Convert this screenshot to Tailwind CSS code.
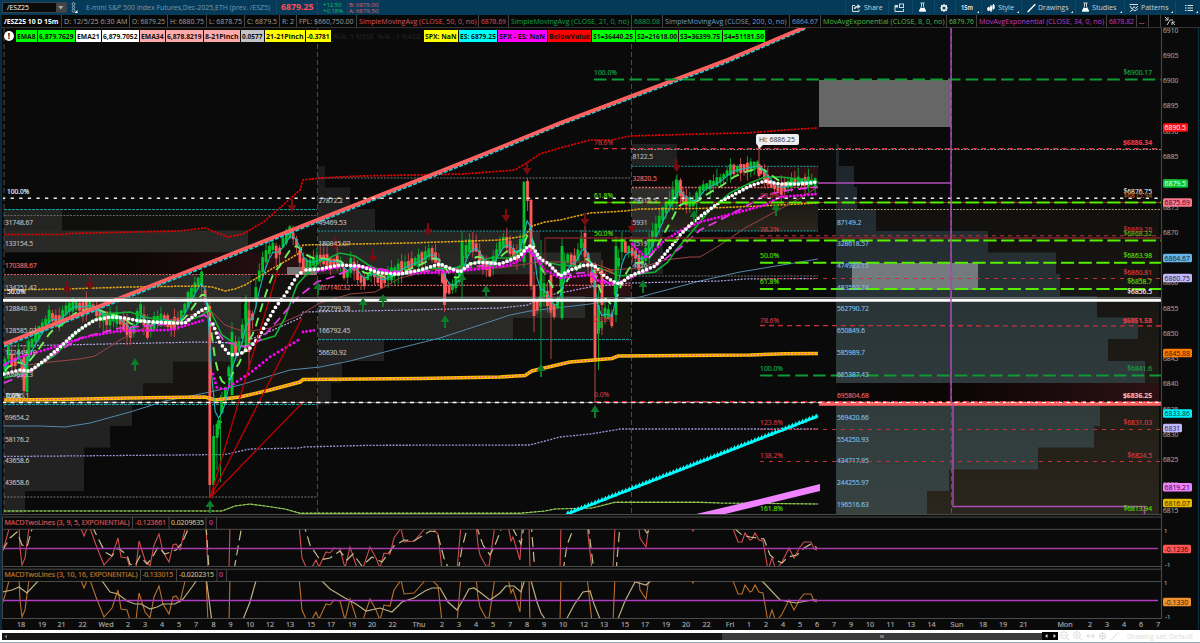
<!DOCTYPE html>
<html lang="en">
<head>
<meta charset="utf-8">
<title>/ESZ25 chart</title>
<script src="https://cdn.jsdelivr.net/npm/@tailwindcss/browser@4"></script>
</head>
<body class="bg-[#0a0a0a] w-[1200px] h-[643px] overflow-hidden font-['Open_Sans','Noto_Sans',sans-serif]">
<div class="flex flex-col w-[1200px] h-[643px] relative border-l-2 border-[#0b2c40]">
  <header class="flex h-[15px] bg-[#053b59] items-center text-[7px] text-[#b9c6cf] -ml-0.5 shrink-0 whitespace-nowrap leading-none">
    <div class="ml-[2px] w-[65px] h-[11px] bg-[#0b0b0b] border border-[#33454f] flex items-center text-white pl-[4px] shrink-0"><span data-w="22">/ESZ25</span><span class="ml-auto w-[10px] h-[9px] bg-[#444] flex items-center justify-center"><svg width="6" height="4"><path d="M0 0H5.5L2.75 3.5Z" fill="#aaa"/></svg></span></div>
    <svg class="ml-[4px] shrink-0" width="8" height="13"><g stroke="#8faec0" fill="none"><circle cx="2.5" cy="3" r="1.4"/><circle cx="2.5" cy="6.3" r="1.2"/><circle cx="2.5" cy="9.6" r="1.4"/></g><path d="M6.5 9v3h-3z" fill="#fff"/></svg>
    <div class="ml-[7px] w-[191px] shrink-0 text-[#7799ad] border-r border-[#17465f] h-[13px] flex items-center"><span data-w="184">E-mini S&amp;P 500 Index Futures,Dec-2025,ETH (prev. /ESZ5)</span></div>
    <div class="w-[40px] pl-[4px] text-[8.6px] font-bold text-[#ff4f55] shrink-0"><span data-w="32.5">6879.25</span></div>
    <div class="w-[30px] pl-[5px] text-[6px] leading-[6px] text-[#0ec55c] border-l border-[#17465f] shrink-0">+12.50<br>+0.18%</div>
    <div class="w-[32px] pl-[1px] text-[6px] leading-[6px] text-[#e06470] border-l border-r border-[#17465f] shrink-0">B: 6879.00<br>A: 6879.50</div>
    <div class="ml-auto flex items-center text-[#c9d2d8] text-[7.2px]">
      <div class="w-[43px] h-[13px] border-l border-[#0d4b6c] flex items-center pl-[5px] gap-[3px]"><svg width="10" height="10" fill="none" stroke="#d5dde2"><path d="M4 2.5H1.5V8.5H8V6.5"/><path d="M3.5 6Q4 3.5 7 3.5" stroke-width="1.5"/><path d="M6.5 1L9.7 3.5L6.5 6Z" fill="#d5dde2" stroke="none"/></svg><span data-w="18.5">Share</span></div>
      <div class="w-[24px] h-[13px] border-l border-[#0d4b6c] flex items-center pl-[5px]"><svg width="11" height="10" fill="none" stroke="#d5dde2"><path d="M4 2.5H1V8.5H9.5V6"/><path d="M1 3.5H4" stroke-width="2"/><rect x="5.5" y="1" width="4" height="3.5"/></svg></div>
      <div class="w-[22px] h-[13px] border-l border-[#0d4b6c] flex items-center pl-[5px]"><svg width="9" height="11"><path d="M2.5 1H6.5M3.5 1V4.5L1.3 9H7.7L5.5 4.5V1" stroke="#dfe5e8" fill="none" stroke-width=".9"/><path d="M2.6 6H6.4L8 9.4H1Z" fill="#fff"/></svg></div>
      <div class="w-[21px] h-[13px] border-l border-[#0d4b6c] flex items-center pl-[4px]"><svg width="10" height="10"><circle cx="5" cy="5" r="2.3" fill="none" stroke="#fff" stroke-width="1.4"/><path d="M5 1V2.5M5 7.5V9M1 5H2.5M7.5 5H9M2.2 2.2L3.2 3.2M6.8 6.8L7.8 7.8M7.8 2.2L6.8 3.2M3.2 6.8L2.2 7.8" stroke="#fff" stroke-width="1.2"/></svg></div>
      <div class="w-[26px] h-[13px] border-l border-[#0d4b6c] flex items-center pl-[5px] text-white font-semibold text-[6.3px]"><span data-w="12">15m</span><i class="ml-auto mt-[9px] mr-[2px] border-l-2 border-b-2 border-l-transparent border-white"></i></div>
      <div class="w-[40px] h-[13px] border-l border-[#0d4b6c] flex items-center pl-[5px] gap-[3px]"><svg width="8" height="10" stroke="#fff"><path d="M1.5 4V8M4 2V9M6.5 1V6.5"/><rect x=".8" y="5" width="1.4" height="2" fill="#fff"/><rect x="3.2" y="4" width="1.6" height="3" fill="#fff"/><rect x="5.8" y="2.5" width="1.5" height="3" fill="none" stroke-width=".7"/></svg><span data-w="16">Style</span><i class="ml-auto mt-[9px] mr-[2px] border-l-2 border-b-2 border-l-transparent border-white"></i></div>
      <div class="w-[54px] h-[13px] border-l border-[#0d4b6c] flex items-center pl-[5px] gap-[2px]"><svg width="9" height="10"><path d="M.7 9L8.3 1.3" stroke="#fff" stroke-width="1.4"/></svg><span data-w="30.5">Drawings</span><i class="ml-auto mt-[9px] mr-[2px] border-l-2 border-b-2 border-l-transparent border-white"></i></div>
      <div class="w-[49px] h-[13px] border-l border-[#0d4b6c] flex items-center pl-[5px] gap-[2px]"><svg width="9" height="11"><path d="M2.5 1H6.5M3.5 1V4.5L1.3 9H7.7L5.5 4.5V1" stroke="#dfe5e8" fill="none" stroke-width=".9"/><path d="M2.6 6H6.4L8 9.4H1Z" fill="#fff"/></svg><span data-w="24.5">Studies</span><i class="ml-auto mt-[9px] mr-[2px] border-l-2 border-b-2 border-l-transparent border-white"></i></div>
      <div class="w-[51px] h-[13px] border-l border-[#0d4b6c] flex items-center pl-[4px] gap-[2px]"><svg width="10" height="10" fill="none" stroke="#d5dde2"><path d="M.5 1.5H9M1 3L3 6L5 3.5L6.5 5.5L9 3M1 8.5L4 6.5L6 8L9 5.5"/></svg><span data-w="27.5">Patterns</span><i class="ml-auto mt-[9px] mr-[2px] border-l-2 border-b-2 border-l-transparent border-white"></i></div>
      <div class="w-[25px] h-[13px] border-l border-[#0d4b6c] flex items-center pl-[9px]"><svg width="8" height="8" stroke="#dfe5e8"><path d="M0 1.5H1.5M2.5 1.5H8M0 4H1.5M2.5 4H8M0 6.5H1.5M2.5 6.5H8"/></svg><i class="ml-auto mt-[9px] mr-[2px] border-l-2 border-b-2 border-l-transparent border-white"></i></div>
    </div>
  </header>
  <div id="status" class="flex h-[13px] shrink-0 bg-[#080808] border-b border-[#333] text-[7px] leading-[13px] whitespace-nowrap"></div>
  <main class="relative flex-1 -ml-0.5">
    <svg id="chart" class="absolute left-0 top-0 overflow-visible font-medium" width="1200" height="602" viewBox="0 28 1200 602"></svg>
    <div class="absolute left-[4px] top-[2px] flex items-center h-[12px]">
      <span class="w-[10px] h-[10px] mr-[2px] rounded-full bg-white text-black text-[8px] font-bold leading-[10px] text-center">!</span>
      <div id="labels" class="flex gap-px text-[6.8px] font-bold leading-[11px] whitespace-nowrap text-[#111]"></div>
    </div>
    <div class="absolute left-[756px] top-[105.5px] w-[43px] h-[11px] rounded-[2px] bg-[#eee] text-[#333] text-[7px] leading-[11px] pl-[3px] whitespace-nowrap"><span data-w="36">Hi: 6886.25</span></div>
  </main>
  <footer class="h-[13px] shrink-0 bg-white -ml-0.5 flex items-center border-b border-[#8fabb8]">
    <div class="ml-[2px] w-[720px] h-[7px] bg-[#161616] shrink-0 flex items-center pl-[2px]"><svg width="4" height="5"><path d="M3 .5V4.5L.5 2.5Z" fill="#777"/></svg></div>
    <div class="w-[320px] h-[7px] bg-[#3b3b3b] shrink-0 flex items-center justify-center"><i class="w-[4px] h-[3px] bg-[#777]"></i></div>
    <div class="w-[16px] h-[8px] bg-black flex items-center justify-around shrink-0"><svg width="3" height="4"><path d="M2.5 0V4L0 2Z" fill="#ddd"/></svg><svg width="3" height="4"><path d="M.5 0V4L3 2Z" fill="#ddd"/></svg></div>
    <svg width="64" height="12" class="shrink-0" fill="none" stroke="#dcdcdc"><circle cx="6" cy="5" r="3.3"/><path d="M8.5 7.5L11 10M4.5 5H7.5"/><circle cx="19" cy="5" r="3.3"/><path d="M21.5 7.5L24 10M17.5 5H20.5M19 3.5V6.5"/><path d="M29 6H36M31 4L28.5 6L31 8M34 4L36.5 6L34 8"/><circle cx="44.5" cy="6" r="3"/><path d="M44.5 2V10M40.5 6H48.5M53 10L61 2"/></svg>
    <div class="ml-[5px] text-[7px] text-[#dedede] whitespace-nowrap"><span data-w="66">Drawing set: Default</span></div>
  </footer>
</div>
<script>
const R='#dc5458',G='#16a24a',B='#6c9fc2',W='#a0a0a0';
const st=[['/ESZ25 10 D 15m',59.5,'#fff',1],['D: 12/5/25 6:30 AM',68.5,W],['O: 6879.25',38,W],['H: 6880.75',39,W],['L: 6878.75',38,W],['C: 6879.5',35,W],['R: 2',17,W],['FPL: $660,750.00',59.5,W],['SimpleMovingAvg (CLOSE, 50, 0, no)',122.5,R],['6878.69',30,R],['SimpleMovingAvg (CLOSE, 21, 0, no)',123,G],['6880.08',31,G],['SimpleMovingAvg (CLOSE, 200, 0, no)',126.5,B],['6864.67',31,B],['MovAvgExponential (CLOSE, 8, 0, no)',126.5,'#4fb84b'],['6879.76',30,'#4fc14b'],['MovAvgExponential (CLOSE, 34, 0, no)',130,'#c03cc0'],['6878.82',30,'#c03cc0'],['...',12,'#ccc'],['',12,W]];
document.getElementById('status').innerHTML=st.map(([t,w,c,b])=>`<div class="border-r border-[#444] pl-[2px] shrink-0 flex items-center ${b?'font-bold':''}" style="width:${w}px;color:${c}"><span ${t.length>3?`data-w="${t=='R: 2'?12:w-5}"`:''}>${t}</span></div>`).join('')+'<svg width="14" height="12" class="ml-[3px]" fill="none" stroke="#ddd"><path d="M1 2L4 5M4 2V5H1M3 10L6 5H9M8 7V10M8 7L11 10M8 7H11" stroke-width=".9"/></svg>';
const lb=[['EMA8',21,'#0f0'],['6,879.7629',37,'#0f0'],['EMA21',25,'#fff'],['6,879.7052',37,'#fff'],['EMA34',25,'#ffaaaa'],['6,878.8219',37,'#ffaaaa'],['8-21Pinch',36,'#ffaaaa'],['0.0577',23,'#c4c4c4'],['21-21Pinch',40,'#ff0'],['-0.3781',25,'#ff0'],['N/A :1 NYSE',43,''],['N/A :-1 NASD',46.5,''],['SPX: NaN',34,'#ff0'],['ES: 6879.25',38.5,'#0ff'],['SPX - ES: NaN',48.5,'#f0f'],['BelowValue',43.5,'#f00'],['S1=36440.25',42.5,'#0f0'],['S2=21618.00',42.7,'#0f0'],['S3=36399.75',42.7,'#0f0'],['S4=51181.50',42.5,'#0f0']];
document.getElementById('labels').innerHTML=lb.map(([t,w,c])=>`<div class="h-[12px] flex items-center justify-center ${c?'':'text-[#1c1c1c]'}" style="width:${w}px;${c?'background:'+c:''}"><span data-w="${w-2.5}">${t}</span></div>`).join('');
// captions with a fixed width
document.querySelectorAll('[data-w]').forEach(e=>{const w=e.dataset.w;e.outerHTML=`<svg class="overflow-visible shrink-0" width="${w}" height="11"><text x="0" y="8" fill="currentColor" textLength="${w}" lengthAdjust="spacingAndGlyphs">${e.innerHTML}</text></svg>`});

let o='';
const add=s=>o+=s;
const rect=(x,y,x2,y2,f)=>add(`<rect x="${x}" y="${y}" width="${x2-x}" height="${y2-y}" fill="${f}"/>`);
const ln=(x,y,x2,y2,c,w=1,d='')=>add(`<line x1="${x}" y1="${y}" x2="${x2}" y2="${y2}" stroke="${c}" stroke-width="${w}" ${d?`stroke-dasharray="${d}"`:''}/>`);
const pl=(p,c,w=1,d='',e='')=>add(`<polyline points="${p}" fill="none" stroke="${c}" stroke-width="${w}" ${d?`stroke-dasharray="${d}"`:''} ${e}/>`);
const tx=(x,y,t,c='#aaa',s=6.6,a='start',e='')=>add(`<text x="${x}" y="${y+2.4}" fill="${c}" stroke="${c}" stroke-width=".18" font-size="${s}" text-anchor="${a}" ${e}>${t}</text>`);
add(`<defs><clipPath id="cm"><rect x="3" y="28" width="1158" height="486"/></clipPath><clipPath id="c1"><rect x="3" y="529.5" width="1158" height="36.5"/></clipPath><linearGradient id="poc"><stop offset="0" stop-color="#080808"/><stop offset=".4" stop-color="#0d0606"/><stop offset="1" stop-color="#2c1114"/></linearGradient><linearGradient id="va" x2="0" y2="1"><stop offset="0" stop-color="#11100e"/><stop offset="1" stop-color="#2a261d"/></linearGradient><linearGradient id="pr" x2="0" y2="1"><stop offset="0" stop-color="#1b242b"/><stop offset=".5" stop-color="#2b3639"/><stop offset="1" stop-color="#374241"/></linearGradient><linearGradient id="v1" x2="0" y2="1"><stop offset="0" stop-color="#0f0f0e"/><stop offset="1" stop-color="#171511"/></linearGradient></defs><g clip-path="url(#cm)">`);
// volume profiles
rect(4,209,317,403,'url(#v1)');
[[209,62,'#242423'],[230.5,248,'#292927'],[274.5,251,'#2b2b2a'],[296,241,'#2a2a29'],[318,241,'#292928'],[339.5,241,'#292928'],[361,173,'#282827'],[382.5,143,'#272727'],[404,132,'#222'],[425.5,110,'#222'],[447,84,'#222'],[469,84,'#222'],[491,25,'#222']].forEach(([y,x,f])=>rect(4,y,x,y+22,f));
rect(4,252.5,317,275,'url(#poc)');
rect(318,231,631,339.5,'url(#v1)');
[[166,325,'#1c1c1c'],[187.5,350,'#1e1e1e'],[209,375,'#202020'],[231,540,'#252524'],[252.5,601,'#272725'],[296,585,'#2a2a28'],[317.5,513,'#2a2a28'],[339,384,'#222'],[361,342,'#202020'],[382.5,331,'#1e1e1e']].forEach(([y,x,f])=>rect(318,y,x,y+22,f));
rect(318,274.5,631,296,'url(#poc)');
rect(632,188,818,231,'url(#va)');
[[144,677,'#212121'],[188,677,'#2d2d2b'],[209,663,'#2d2c2a'],[231,663,'#242424'],[252.5,663,'#202020']].forEach(([y,x,f])=>rect(632,y,x,y+21.7,f));
rect(632,166,818,188,'url(#poc)');
rect(836,209,1159,514,'url(#va)');
add(`<path fill="url(#pr)" d="M836 144H839V166H854V187H857V209H876V231H988V252.5H1056V274H1060V296H1097V317.5H1138V339H1108V361H1145V383H836ZM836 404H1100V426H1094V447.5H1038V469.5H949V491H927V514H836Z"/>`);
rect(836,383,1159,404,'url(#poc)');
rect(819,80,951,127,'#666');
rect(852,263,978,290,'#737b7e');
rect(287,267,317,275,'#777');
[4,317.5,631.5].forEach(x=>ln(x,28,x,514,'#4a4a4a',1,'5 3'));
ln(951.5,28,951.5,514,'#555',1,'5 3');
// session levels
const D='2 1.3';
ln(4,209.5,317,209.5,'#1b9a9a',1,'3 1');ln(4,215.5,317,215.5,'#666',1,D);ln(4,274.5,317,274.5,'#e86a6a',1.2,D);ln(4,404.5,317,404.5,'#15a0a0',1,'3 1');ln(4,497,317,497,'#777',1,D);
ln(318,178,631,178,'#777',1,D);ln(318,231,631,231,'#15a0a0',1,D);ln(318,285.3,631,285.3,'#e86a6a',1.2,D);ln(318,339.5,631,339.5,'#15a0a0',1,'3 1');
ln(631,149.5,1161,149.5,'#999',1,D);ln(632,166.3,818,166.3,'#1aa',1,D);ln(632,187.5,818,187.5,'#e86a6a',1.4,D);ln(632,231,818,231,'#1aa',1,D);ln(632,276,818,276,'#777',1,D);
ln(818,209.5,1161,209.5,'#a9a477',1,D);
// moving averages and stepped levels
pl('2,426 40,426 65,427 90,423 130,412 165,401 210,392 240,385 290,370 320,367 350,361 400,348 440,338 480,325 510,315 530,311 590,304 640,297 700,281 740,272 818,259','#5488a8');
pl('4,511 222,511 235,506 250,504 265,506 285,509 300,513.3 520,513.3 545,511 555,509 592,508 615,502.3 700,502.3 720,503 818,504','#7da832',1.2);
pl('4,511 222,511 235,506 250,504 265,506 285,509 300,513 520,513 545,511 555,509 592,508 615,502 700,502 720,503 818,504','#9eea8c',.8,'2 2');
pl('4,456.5 180,455 225,454.5 250,449 300,448 303,447 370,445.3 530,445 545,441 560,437 590,434 615,430 620,429 818,429','#9b94d8',1.3,D);
pl('4,346 60,345 200,342 240,343 262,335 300,318 303,312 410,310 500,308 528,305 545,296 590,287 630,283 720,281 745,279 818,278.5','#b3a8e8',1.2,D);
// price path and candles
const P=[[4,372],[8,352],[14,365],[20,350],[24,385],[28,350],[34,340],[42,328],[50,315],[58,322],[66,310],[74,304],[82,308],[90,304],[100,315],[108,319],[116,317],[124,325],[132,335],[140,308],[148,332],[156,320],[164,318],[172,325],[180,320],[188,300],[196,285],[202,278],[206,300],[210,390],[213,460],[217,435],[220,415],[226,390],[232,350],[240,345],[246,310],[252,320],[258,280],[264,260],[272,245],[278,255],[284,240],[290,232],[296,240],[302,265],[308,265],[320,258],[330,262],[340,262],[346,278],[352,262],[360,278],[364,282],[372,270],[380,283],[390,275],[400,268],[410,264],[420,260],[430,252],[438,260],[444,285],[450,290],[458,280],[464,255],[470,245],[476,247],[482,262],[490,270],[498,250],[505,240],[512,250],[518,258],[524,222],[528,200],[531,240],[535,290],[538,310],[544,290],[550,305],[556,313],[562,275],[568,258],[576,262],[582,240],[586,250],[592,280],[596,320],[600,330],[606,310],[612,320],[617,270],[622,245],[630,250],[636,255],[640,265],[648,250],[654,235],[662,215],[672,198],[678,182],[684,200],[694,203],[702,188],[712,184],[720,180],[730,170],[745,168],[758,165],[764,175],[772,185],[780,190],[790,183],[800,181],[817,183]];
const at=x=>{for(let i=1;i<P.length;i++)if(x<=P[i][0]){const a=P[i-1],b=P[i];return a[1]+(b[1]-a[1])*(x-a[0])/(b[0]-a[0])}return 183};
let seed=7;const rnd=()=>(seed=(seed*16807)%2147483647)/2147483647;
const GR='#00c02c',RD='#ff5a5a';
const cd=(x,h,a,b,l,u)=>{ln(x,h,x,l,u?'#0b9a2c':'#b84646',1);rect(x-1.4,Math.min(a,b),x+1.4,Math.max(a,b,Math.min(a,b)+1),u?GR:RD)};
let e1=at(4),e2=at(4),f=[],s=[];
for(let x=5;x<818;x+=3.39){const y=at(x),pv=at(x-3.4);
 const skip=(x>207&&x<216)||(x>522&&x<534)||(x>593&&x<598);
 if(!skip){const big=Math.abs(y-pv)>7?1.4:1;let u=y<pv-(rnd()-.5)*6;const h=(x>700?4:6)*big+rnd()*8;let a=y+(u?h/2:-h/2),b=y-(u?h/2:-h/2);cd(x,Math.min(a,b)-rnd()*9,a,b,Math.max(a,b)+rnd()*10,u)}
 e1+=(y-e1)*.5;e2+=(y-e2)*.22;f.push(x.toFixed(1)+','+e1.toFixed(1));s.push(x.toFixed(1)+','+e2.toFixed(1));}
[[24,345,355,391,400,0],[27,340,350,392,396,1],[209.8,300,306,485,498,0],[213.6,425,436,485,495,1],[217,422,424,438,470,1],[220.5,395,421,423,482,1],[232,322,332,395,405,1],[246,295,302,345,350,1],[249,300,318,352,370,0],[524,181,182,262,268,1],[527.5,178,181,201,211,0],[531,198,200,286,290,0],[534,272,285,316,332,0],[541,240,262,300,365,1],[444.5,270,274,305,312,0],[462,231,241,280,300,1],[562,238,246,318,320,1],[595,262,265,361,402,0],[598.5,290,305,330,370,1],[602,260,270,305,335,0],[616,236,246,315,322,1],[677,174,180,198,208,1],[680.5,178,180,196,208,0],[585,226,233,257,262,0],[551,262,275,310,359,0],[759,147,164,176,178,0]].forEach(c=>cd(...c));
pl('4,234.5 66,234.5 68,233.5 178,231 205,228 228,237 243,234 250,230 265,221 300,190 303,180 320,178 360,176 463,174 515,170 528,162 540,154 560,148 590,140 612,140 630,136 700,134 745,133 800,129 818,128','#e60000',1.7,'2.2 1.2');
pl('4,290 65,289 130,287 200,286 212,287 225,291 235,289 245,285 270,270 298,254 303,245 410,243 500,240 525,236 532,226 545,222 560,220 590,213 625,211 640,209 700,208.5 760,206 818,203','#e8a810',1.5,'2.4 1');
pl('20,366 50,362 80,359 95,356 120,340 150,325 190,315 210,310 225,325 245,332 270,328 300,315 320,303 350,294 375,292 400,278 440,268 500,268 540,262 590,262 612,270 640,268 665,260 690,257 700,257 720,245 745,228 760,220 780,209 800,198 818,187','#9c4545');
const T='4,400 60,399.5 130,398 205,397 215,400 240,397 270,390 300,382 303,379.5 420,378.5 500,377 525,375.5 532,371 540,369 570,362 612,358.5 618,356 750,355 785,353.7 818,353.5';
pl(T,'#f5c000',3.6);pl(T,'#ff30c8',1.2,'1.4 2');
pl('4,378 30,372 55,355 75,335 90,322 105,314 130,312 145,317 165,321 185,322 200,316 210,310 222,335 240,347 258,341 275,336 285,318 297,285 305,276 320,262 340,253 355,256 370,266 390,275 410,274 430,268 450,269 470,264 490,258 510,258 525,250 545,262 560,265 575,266 590,265 605,270 620,276 640,274 655,272 668,262 676,250 690,234 710,210 730,193 750,183 765,177 780,177 800,179 818,182','#10b030',1.6);
pl(s.join(' '),'#6df05a',1.9,'9 6');
pl(f.join(' '),'#16bcbc',1.1);
pl('4,383 30,372 60,350 80,338 120,328 170,324 205,315 225,342 245,347 260,340 280,318 297,298 317,282 335,276 360,266 400,272 450,270 510,262 528,250 560,275 590,272 612,285 650,270 680,248 700,230 720,220 750,204 765,195 790,190 818,187','#e838e8',1.7,'9 5');
const dots=(p,c,w,g)=>pl(p,c,w,`0 ${g}`,'stroke-linecap="round"');
dots('4,365 20,357 45,350 70,342 90,336 120,331 170,330 205,320','#f0f',2.8,3.6);
dots('213,374 217,388 225,389 235,383 250,373 270,357 300,339','#f0f',3,4.6);dots('303,332 317,330','#f0f',2.8,3.6);
dots('318,271 350,265 380,270 400,274 450,272 480,269 510,265 520,260 528,249 545,270 560,278 590,275 600,282 615,284','#f0f',2.8,3.6);
dots('632,244 638,250 646,258 655,250 665,240 680,231 700,222 740,212 765,205 780,197 818,194','#f0f',2.8,3.6);
dots('4,374 20,370 30,371 45,360 60,347 75,333 85,326 95,320 110,317 125,318 140,321 155,322 170,323 185,323 200,311 209,307','#fff',3.7,4.1);
dots('213,324 220,343 230,355 240,354 250,348 260,335 268,320 275,308 285,295 297,276 303,271','#fff',3.7,4.8);
dots('306,270 320,269 340,265 360,266 380,273 400,274 420,270 440,264 452,269 460,272 470,264 480,262 500,264 520,256 528,246 532,246 540,258 550,265 560,276 570,270 585,265 594,265 602,274 612,281 620,284 630,276 640,272 655,266 670,248 680,235 693,222 705,213 720,202 735,194 750,186 765,181 780,184 800,184 818,182','#fff',3.7,4.1);
// trend lines
pl('4,346.5 317,222.5 474,160.5 560,125 727,62.5 805,29','#10d5dd',1.8,'4 1.5');
pl('4,344 317,220 474,158 560,123 727,60 805,27','#ff6060',3.6);
ln(210,498,278,270,'#c00000',1.3);ln(210,498,302,318,'#c00000',1.3);ln(210,498,304,401,'#c00000',1.3);
let z='';for(let x=567;x<818;x+=3.4){const y=513-(x-567)*.39;z+=`M${x-2.5} ${y+3}L${x+1.2} ${y-3}L${x+2.5} ${y+2}Z`}
add(`<path d="${z}" fill="#0ff"/>`);ln(567,514,818,416,'#0ff',2);
add('<path d="M694 514.5L760 499L820 484V491L723 514.5Z" fill="#ee82ff"/>');
// fibonacci and price levels
const A='#c83038',N='#55f000',g2='12.5 5.2';
ln(594,79.5,1161,79.5,'#0f9a35',1.8,g2);
ln(594,148.6,1161,148.6,'#d83038',1.2,'5 4');
ln(545,238,1161,238,'#7c2228',1.7);ln(545,238,545,275,'#7c2228',1);ln(760,235.8,1161,235.8,A,1,'4 4');
ln(594,202.5,1161,202.5,'#a8302c',1);ln(594,202.5,1161,202.5,N,2,'13.2 4.5');ln(594,240.5,1161,240.5,N,2,'13.2 4.5');
ln(760,262.7,1161,262.7,N,2,'13.2 4.5');ln(760,289,1161,289,N,2,'13.2 4.5');
ln(760,278.5,1161,278.5,A,1,'4 5');ln(760,325.5,1161,326,A,1.3,'5 4');ln(760,375.5,1161,375.5,'#0f9a35',1.8,g2);
ln(760,429.5,1161,429.5,A,1,'4 5');ln(760,461.5,1161,461.5,A,1,'4 5');
ln(2,198.3,1161,198.3,'#eee',1.6,'3.3 5.3');
ln(2,402.5,1161,402.5,'#888',.8);ln(2,402.5,1161,402.5,'#fff',1.7,'4 4.5');ln(595,401.7,1161,401.7,'#e03038',1.3,'5 4');
ln(819,404.3,1161,404.3,'#ff6060',3);ln(819,402.6,1161,402.6,'#ff6060',1.4,'1.7 1.7');ln(819,402.3,1161,402.3,'#fff',1.2,'3 5');
ln(4,297.5,1161,297.5,'#777',.8);ln(2,300.3,1161,300.3,'#fff',3);
add('<path d="M818 183H950.5M951 28V400L953 406V506.5H1144.5V514" fill="none" stroke="#b04cb8" stroke-width="1.4"/>');
// arrows
[[67,288],[90,284],[292,206],[335.5,244],[373,257],[428,230],[506,216],[527,169],[585,220],[676.5,166],[632,227]].forEach(([x,y])=>add(`<path d="M${x-1} ${y-7}h2v6h3.5L${x} ${y+6}L${x-4.5} ${y-1}h3.5Z" fill="#780c10"/>`));
[[135,364],[210,506],[363,304],[383,300],[462,279],[445,321],[486,291],[541,370],[595,411],[694,216],[776,209],[643,286],[318,288]].forEach(([x,y])=>add(`<path d="M${x-1} ${y+7}h2v-6h3.5L${x} ${y-6}L${x-4.5} ${y+1}h3.5Z" fill="#0c7a28"/>`));
// volume and fib captions
[['31748.67',222.5],['133154.5',244],['134251.42',287.5],['128840.93',309],['128585.07',331],['122449.19',352.5],['109633.3',374.5],['75095.1',396],['69654.2',417.5],['58176.2',439.5],['43658.6',461],['43658.6',483]].forEach(a=>tx(5,a[1],a[0],'#b8b8b8'));
tx(5,265.5,'170388.67','#e86464');tx(7,191.5,'100.0%','#eee');tx(7,292,'50.0%','#eee');tx(6,396,'0.0%','#eee');
[['27872.2',200.5],['49469.53',222.5],['180945.07',244],['222799.78',309],['166792.45',331],['56630.92',352.5]].forEach(a=>tx(318.5,a[1],a[0],'#b8b8b8'));tx(318.5,287.5,'267140.32','#d86060');
[['8122.5',157],['79314.5',201],['5931',222.5],['7519',244],['4626',266]].forEach(a=>tx(632.5,a[1],a[0],'#b0b0b0'));tx(632.5,179,'32820.5','#e86464');
[['87149.2',222.5],['328618.57',244],['474923.15',266],['483552.74',287.5],['562790.72',309],['650849.6',331],['585989.7',352.5],['665387.43',374.5],['569420.66',417.5],['554250.93',439.5],['434717.95',461],['244255.97',483],['196516.63',504.5]].forEach(a=>tx(837,a[1],a[0],'#7ab8e0'));tx(837,396,'695804.68','#e06060');
[[594,73,'100.0%',G],[594,142.5,'78.6%',A],[594,195.5,'61.8%','#50d800'],[594,233.5,'50.0%','#50d800'],[594,272,'38.2%',A],[594,320,'23.6%',A],[594,395,'0.0%',A],[760,196,'23.6%',A],[760,230,'38.2%',A],[760,255.5,'50.0%','#50d800'],[760,282,'61.8%','#50d800'],[760,321,'78.6%',A],[760,369,'100.0%',G],[760,423,'123.6%',A],[760,456,'138.2%',A],[760,509,'161.8%','#50d800']].forEach(a=>tx(...a,6.8));
[[73,'$6900.17',G],[142.5,'$6886.34','#e83840',1],[191.5,'$6876.75','#ddd'],[196,'$6875.94','#a55b20'],[230,'$6869.26',A],[233.5,'$6868.32','#58a818'],[255.5,'$6863.98','#50d800'],[272.5,'$6860.81','#d83840'],[282,'$6858.7','#50d800'],[292,'$6856.5','#eee'],[320.5,'$6851.58','#e83840',1],[368.8,'$6841.6','#15a035'],[395.8,'$6836.25','#ffb0b0',1],[423,'$6831.03','#d83840'],[456,'$6824.5','#d83840'],[508.7,'$6813.94','#50d800']].forEach(a=>tx(1152,a[0],a[1],a[2],6.7,'end',a[3]?'font-weight="bold" textLength="29"':''));
add('</g><path d="M757 144H764L759 149Z" fill="#eee"/>');
// frames
ln(1161.5,28,1161.5,619,'#444',1.2);
[514.5,517,529.3,566.5,569.2,581.5,618.5].forEach(y=>ln(2,y,1161,y,'#4a4a4a',1));ln(2.5,517,2.5,618,'#444');
ln(1198.5,28,1198.5,630,'#0b3040',1);
// oscillators
const M=['2,553 6,540 10,525 19,525 20,548 22,565 25,558 30,520','80,526 84,536 88,526 90,528 96,545 104,565 112,556 118,538 121,557 127,558 130,568 136,568 139,541 145,560 150,566 154,545 159,534 163,552 169,562 173,545 176,544 180,550 186,525','206,525 208,570','229,570 230,525','299,525 302,558 306,567 312,567 316,560 319,567 326,552 330,553 334,548 340,549 345,568 350,547 357,568 363,568 370,547 376,558 380,568 384,553 390,554 394,538 401,528 404,542 414,541 422,532 428,525 432,528 438,534 442,570','457,570 461,525','476,525 478,545 480,555 486,566 489,566 495,525','508,525 511,541 513,537 520,560 522,525','529,525 530,570','560,570 561,525','587,525 592,570','613,570 615,525','638,520 640,538 646,547 649,525','690,525 693,531 696,525','732,526 738,542 742,542 745,533 750,540 752,539 755,533 759,540 763,541 768,570 772,558 776,570 782,562 789,548 794,558 800,547 804,542 811,542 814,549 817,550'];
add('<g clip-path="url(#c1)">');M.forEach(p=>pl(p,'#d04c4c',1.1));
['2,551 10,538 17,532 22,545 27,547 34,522','92,526 98,538 105,552 112,556 118,548 127,555 130,564 135,566 140,556 147,564 152,558 158,547 165,554 176,550 182,543 190,525','206,525 209,570','234,570 242,525','303,522 310,545 320,560 330,558 340,551 347,560 353,554 362,566 372,557 382,562 394,546 404,540 414,541 430,531 437,532 444,558 450,572','458,572 462,548 468,525','476,525 483,545 490,555 495,545 501,530','512,527 521,544 524,525','531,522 535,572','563,572 567,545 574,527','588,524 594,572','616,572 620,525','643,527 647,533 650,529','734,528 742,535 750,537 764,539 770,555 776,560 782,563 788,557 797,555 804,548 811,544 817,548'].forEach(p=>pl(p,'#c9bd8a',1.2,'10 5'));
ln(2,548.5,1158,548.5,'#a53aa8',1.3);add('</g><g transform="translate(0 52)" clip-path="url(#c1)">');
M.forEach(p=>pl(p,'#b8702a',1.1));
['2,540 12,538 19,535 27,541 38,529','100,526 110,540 118,542 127,549 135,552 141,552 150,557 157,555 163,552 175,552 183,547 192,535 199,525','206,525 212,570','242,570 250,550 257,525','320,527 330,537 345,546 356,552 366,559 380,556 392,560 402,550 414,546 425,539 432,536 440,536 448,550 457,558 463,548 469,537 474,536 481,541 490,548 500,541 506,534 514,534 521,540 525,527','530,525 537,550 541,561 547,570','565,570 574,553 583,540 590,539 594,552 602,572','616,572 625,549 635,530 646,533 653,527','758,525 765,532 780,548 796,551 812,548 817,548'].forEach(p=>pl(p,'#bdb080',1.2));
ln(2,548.5,1158,548.5,'#b03cc0',1.3);add('</g>');
const tl=(x,y,t,c,w)=>tx(x,y,t,c,7.2,'start',`textLength="${w}" lengthAdjust="spacingAndGlyphs"`);
tl(4.5,522.7,'MACDTwoLines (3, 9, 5, EXPONENTIAL)',R,125);tl(135,522.7,'-0.123661',R,31);tl(171,522.7,'0.0209635','#c0b884',33);tl(209,522.7,'0','#c040c8',4);
tl(4.5,575,'MACDTwoLines (3, 10, 16, EXPONENTIAL)','#c07828',133);tl(142,575,'-0.133015','#c07828',31);tl(179,575,'-0.0202315','#c0b884',35);tl(219,575,'0','#c040c8',4);
[132.5,169,206,216.5].forEach(x=>ln(x,517,x,529,'#444'));[140.5,176.5,217,226.5].forEach(x=>ln(x,569,x,581,'#444'));
// price scale
for(let i=0;i<20;i++)tx(1163,30.3+i*25.26,String(6910-5*i),'#909090',6.7);
tx(1164,531,'1','#999',6);tx(1165,565,'-1','#999',6);tx(1164,583,'1','#999',6);tx(1165,617,'-1','#999',6);
const bd=(y,t,f,c,w)=>add(`<rect x="1163" y="${y-4.3}" width="${w}" height="8.6" rx="1.5" fill="${f}"/><text x="1164.5" y="${y+2.5}" font-size="6.9" fill="${c}">${t}</text>`);
bd(127.5,'6890.5','#ff1010','#fff',25);bd(183.5,'6879.5','#08c830','#fff',25);bd(202.5,'6875.69','#f87890','#402',29);bd(258,'6864.67','#64b4e8','#123',29);bd(278,'6860.75','#c0b8ff','#223',29);bd(353,'6845.88','#ff7c00','#301800',29);bd(413.5,'6833.86','#00f0ff','#033',29);bd(428,'6831','#c0b8ff','#223',19);bd(487.3,'6819.21','#ee82ff','#303',29);bd(503,'6816.07','#e6b800','#320',29);bd(549,'-0.1236','#ff5555','#300',28);bd(602,'-0.1330','#f09030','#320',28);
// time scale
'18@21,19@42,21@61.5,22@82.5,Wed@106,2@128,3@145,4@162,5@179,7@196,8@213.5,9@230.5,10@250,12@270,13@290,15@311,17@331,19@352,20@372,22@392.5,Thu@419,2@442,3@459,4@476,5@493,7@510,8@527,9@544,10@563,12@584,13@604,15@625,17@645,19@666,20@686,22@706.5,Fri@730,1@749,2@766,4@783,5@800,6@817,7@834,9@851,10@870,11@890.5,13@911,14@931.5,Sun@957,18@983,19@1003,21@1023.5,Mon@1065,2@1090,3@1107,4@1124,6@1141,7@1158'.split(',').forEach(v=>{const[a,b]=v.split('@');tx(+b,624.7,a,'#a8a8a8',7.2,'middle')});
document.getElementById('chart').innerHTML=o;
</script>
</body>
</html>
